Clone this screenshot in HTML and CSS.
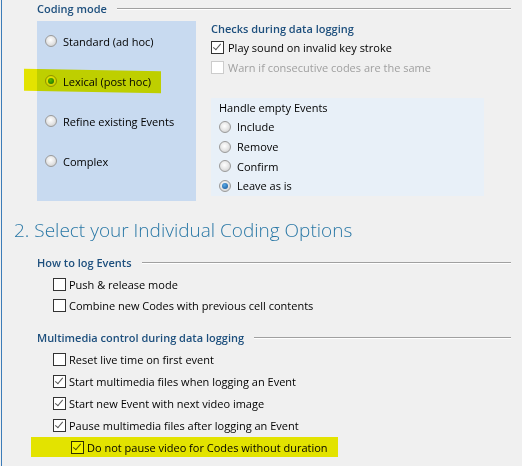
FILE: index.html
```html
<!DOCTYPE html>
<html lang="en">
<head>
    <meta charset="UTF-8">
    <title>Coding Options</title>
    <link rel="stylesheet" href="styles.css">
</head>
<body>
    <div class="window">
        <div class="group-head">
            <span class="group-title">Coding mode</span>
            <span class="group-line"></span>
        </div>

        <div class="top-row">
            <div class="mode-panel">
                <div class="radio-row"><span class="radio"></span>Standard (ad hoc)</div>
                <div class="radio-row"><span class="radio checked green"></span>Lexical (post hoc)</div>
                <div class="radio-row"><span class="radio"></span>Refine existing Events</div>
                <div class="radio-row"><span class="radio"></span>Complex</div>
                <span class="marker marker-lexical"></span>
            </div>

            <div class="checks-col">
                <div class="group-title">Checks during data logging</div>
                <div class="check-row"><span class="check on"></span>Play sound on invalid key stroke</div>
                <div class="check-row disabled"><span class="check"></span>Warn if consecutive codes are the same</div>

                <div class="empty-panel">
                    <div class="empty-title">Handle empty Events</div>
                    <div class="small-radio"><span class="radio"></span>Include</div>
                    <div class="small-radio"><span class="radio"></span>Remove</div>
                    <div class="small-radio"><span class="radio"></span>Confirm</div>
                    <div class="small-radio"><span class="radio checked blue"></span>Leave as is</div>
                </div>
            </div>
        </div>

        <h2 class="step-title">2. Select your Individual Coding Options</h2>

        <div class="group-head">
            <span class="group-title">How to log Events</span>
            <span class="group-line"></span>
        </div>
        <div class="options">
            <div class="opt-row"><span class="check"></span>Push &amp; release mode</div>
            <div class="opt-row"><span class="check"></span>Combine new Codes with previous cell contents</div>
        </div>

        <div class="group-head media-head">
            <span class="group-title">Multimedia control during data logging</span>
            <span class="group-line"></span>
        </div>
        <div class="options media">
            <div class="opt-row"><span class="check"></span>Reset live time on first event</div>
            <div class="opt-row"><span class="check on"></span>Start multimedia files when logging an Event</div>
            <div class="opt-row"><span class="check on"></span>Start new Event with next video image</div>
            <div class="opt-row"><span class="check on"></span>Pause multimedia files after logging an Event</div>
            <div class="opt-row sub"><span class="check on"></span>Do not pause video for Codes without duration</div>
            <span class="marker marker-pause"></span>
        </div>
    </div>
</body>
</html>
```

FILE: styles.css
```css
html, body {
    margin: 0;
    height: 100%;
}
body {
    background: #f0f0f0;
    font-family: "Open Sans", "Noto Sans", sans-serif;
    font-size: 11px;
    color: #000;
    padding-left: 1px;
    box-sizing: border-box;
}
.window {
    position: relative;
    height: 100%;
    border-left: 1px solid #3c7cb8;
    padding-top: 1px;
    box-sizing: border-box;
}
.group-head {
    display: flex;
    align-items: center;
    gap: 10px;
    margin-left: 35px;
    width: 474px;
    height: 16px;
}
.group-title {
    font-weight: 600;
    font-size: 11px;
    color: #1d4f7d;
    line-height: 16px;
    white-space: nowrap;
}
.group-line {
    flex: 1;
    border-top: 1px solid #a0a0a0;
    border-bottom: 1px solid #fff;
}
.top-row {
    display: flex;
    gap: 15px;
    margin-left: 35px;
    margin-top: 4px;
}
.mode-panel {
    position: relative;
    width: 159px;
    height: 180px;
    background: #c8daf0;
    padding: 12px 0 0 8px;
    box-sizing: border-box;
    display: flex;
    flex-direction: column;
    gap: 24px;
}
.radio-row, .small-radio, .check-row, .opt-row {
    display: flex;
    align-items: center;
    position: relative;
    z-index: 0;
    white-space: nowrap;
}
.radio-row {
    height: 16px;
    gap: 6px;
}
.radio {
    width: 12px;
    height: 12px;
    border-radius: 50%;
    border: 1px solid #9a9a9a;
    box-sizing: border-box;
    background: radial-gradient(circle at 45% 40%, #ffffff 0%, #e6e6e6 50%, #c4c4c4 100%);
    position: relative;
    flex: none;
}
.radio.checked::after {
    content: "";
    position: absolute;
    left: 2px;
    top: 2px;
    width: 6px;
    height: 6px;
    border-radius: 50%;
}
.radio.green::after {
    background: radial-gradient(circle at 40% 35%, #5ec24a, #136e12);
}
.radio.blue::after {
    background: radial-gradient(circle at 40% 35%, #5aa9e6, #0f4f92);
}
.checks-col {
    display: flex;
    flex-direction: column;
}
.check-row {
    height: 20px;
    gap: 4px;
}
.check-row:first-of-type {
    margin-top: 2px;
}
.check {
    width: 13px;
    height: 13px;
    border: 1px solid #333;
    background: #fff;
    box-sizing: border-box;
    flex: none;
    position: relative;
}
.check.on::after {
    content: "";
    position: absolute;
    left: 3px;
    top: 0px;
    width: 3px;
    height: 7px;
    border-right: 1px solid #555;
    border-bottom: 1px solid #555;
    transform: rotate(40deg);
}
.check-row.disabled {
    color: #a0a0a0;
}
.check-row.disabled .check {
    border-color: #cccccc;
}
.empty-panel {
    margin-top: 21px;
    width: 273px;
    height: 98px;
    background: #e8f0f8;
    padding: 2px 0 0 8px;
    box-sizing: border-box;
}
.empty-title {
    line-height: 15px;
    margin-bottom: 2px;
}
.small-radio {
    height: 19.7px;
    gap: 6px;
}
.step-title {
    margin: 16px 0 0 12px;
    font-family: "Open Sans", "Noto Sans", sans-serif;
    font-weight: 300;
    font-size: 19px;
    line-height: 26px;
    color: #2a78a6;
}
.step-title + .group-head {
    margin-top: 12px;
}
.options {
    position: relative;
    margin-left: 51px;
    margin-top: 3px;
}
.opt-row {
    height: 21px;
    gap: 3px;
}
.media-head {
    margin-top: 14px;
}
.options.media {
    margin-top: 2px;
}
.media .opt-row {
    height: 22px;
}
.opt-row.sub {
    margin-left: 18px;
}
.marker {
    position: absolute;
    background: #f2f200;
    mix-blend-mode: multiply;
    z-index: 1;
}
.marker-lexical {
    left: -13px;
    top: 49px;
    width: 137px;
    height: 22px;
    transform: skewY(1deg);
}
.marker-pause {
    left: -22px;
    top: 89px;
    width: 307px;
    height: 20px;
}
```
